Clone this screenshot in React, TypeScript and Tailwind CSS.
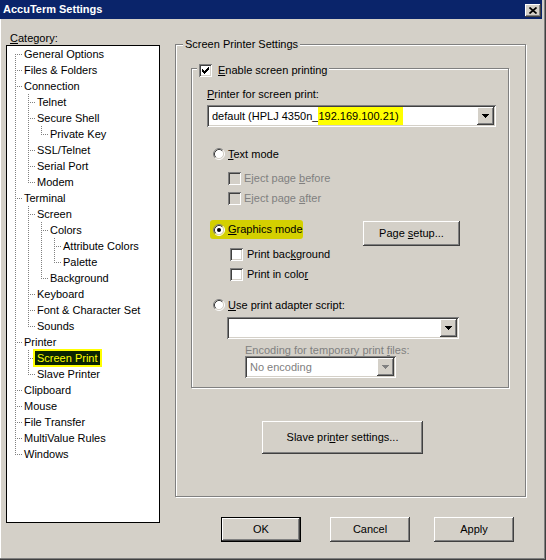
import React from 'react';

const raised =
  'shadow-[inset_-1px_-1px_0_#404040,inset_1px_1px_0_#ffffff,inset_-2px_-2px_0_#808080,inset_2px_2px_0_#d4d0c8]';
const sunken =
  'shadow-[inset_1px_1px_0_#808080,inset_-1px_-1px_0_#ffffff,inset_2px_2px_0_#404040,inset_-2px_-2px_0_#d4d0c8]';
const etched = 'border border-[#808080] shadow-[inset_1px_1px_0_#ffffff,1px_1px_0_#ffffff]';

const tree: [string, number][] = [
  ['General Options', 0],
  ['Files & Folders', 0],
  ['Connection', 0],
  ['Telnet', 1],
  ['Secure Shell', 1],
  ['Private Key', 2],
  ['SSL/Telnet', 1],
  ['Serial Port', 1],
  ['Modem', 1],
  ['Terminal', 0],
  ['Screen', 1],
  ['Colors', 2],
  ['Attribute Colors', 3],
  ['Palette', 3],
  ['Background', 2],
  ['Keyboard', 1],
  ['Font & Character Set', 1],
  ['Sounds', 1],
  ['Printer', 0],
  ['Screen Print', 1],
  ['Slave Printer', 1],
  ['Clipboard', 0],
  ['Mouse', 0],
  ['File Transfer', 0],
  ['MultiValue Rules', 0],
  ['Windows', 0],
];

const hasNext = (i: number) => {
  for (let j = i + 1; j < tree.length; j++) {
    if (tree[j][1] < tree[i][1]) return false;
    if (tree[j][1] === tree[i][1]) return true;
  }
  return false;
};

const Connectors = ({ i }: { i: number }) => {
  const L = tree[i][1];
  const lines: React.ReactNode[] = [];
  for (let k = 0; k < L; k++) {
    let a = i - 1;
    while (tree[a][1] !== k) a--;
    if (hasNext(a)) lines.push(<line key={k} x1={13 * k + 6.5} y1={0} x2={13 * k + 6.5} y2={16} />);
  }
  const x = 13 * L + 6.5;
  lines.push(<line key="v" x1={x} y1={i === 0 ? 8 : 0} x2={x} y2={hasNext(i) ? 16 : 9} />);
  lines.push(<line key="h" x1={x + 1} y1={8.5} x2={13 * L + 13} y2={8.5} />);
  return (
    <svg width={13 * (L + 1)} height={16} className="shrink-0" stroke="#808080" strokeDasharray="1 1" shapeRendering="crispEdges">
      {lines}
    </svg>
  );
};

const Mn = ({ text, at }: { text: string; at: number }) => (
  <>
    {text.slice(0, at)}
    <u>{text[at]}</u>
    {text.slice(at + 1)}
  </>
);

const CheckBox = ({ checked, disabled }: { checked?: boolean; disabled?: boolean }) => (
  <div className={`w-[13px] h-[13px] shrink-0 ${disabled ? 'bg-[#d4d0c8]' : 'bg-white'} ${sunken}`}>
    {checked && (
      <svg width="13" height="13" fill="#000" shapeRendering="crispEdges">
        <rect x="3" y="5" width="1" height="3" />
        <rect x="4" y="6" width="1" height="3" />
        <rect x="5" y="7" width="1" height="3" />
        <rect x="6" y="6" width="1" height="3" />
        <rect x="7" y="5" width="1" height="3" />
        <rect x="8" y="4" width="1" height="3" />
        <rect x="9" y="3" width="1" height="3" />
      </svg>
    )}
  </div>
);

const Radio = ({ checked }: { checked?: boolean }) => (
  <svg width="12" height="12" className="shrink-0" fill="none">
    <circle cx="6" cy="6" r="4.5" fill="#fff" />
    <path d="M2.11 9.89 A5.5 5.5 0 0 1 9.89 2.11" stroke="#808080" />
    <path d="M9.89 2.11 A5.5 5.5 0 0 1 2.11 9.89" stroke="#ffffff" />
    <path d="M2.82 9.18 A4.5 4.5 0 0 1 9.18 2.82" stroke="#404040" />
    <path d="M9.18 2.82 A4.5 4.5 0 0 1 2.82 9.18" stroke="#d4d0c8" />
    {checked && <circle cx="6" cy="6" r="2" fill="#000" />}
  </svg>
);

const Combo = ({ className, disabled, children }: { className: string; disabled?: boolean; children?: React.ReactNode }) => (
  <div className={`flex h-[22px] p-[2px] bg-white ${sunken} ${className}`}>
    <div className={`flex-1 flex items-stretch pl-[3px] overflow-hidden whitespace-nowrap ${disabled ? 'text-[#808080]' : ''}`}>
      {children}
    </div>
    <div className={`w-[17px] flex items-center justify-center bg-[#d4d0c8] ${raised}`}>
      <svg width="7" height="4" shapeRendering="crispEdges">
        <polygon points="0,0 7,0 3.5,4" fill={disabled ? '#808080' : '#000'} />
      </svg>
    </div>
  </div>
);

const Button = ({ className, isDefault, children }: { className: string; isDefault?: boolean; children: React.ReactNode }) =>
  isDefault ? (
    <div className={`border border-black ${className}`}>
      <div className={`w-full h-full flex items-center justify-center ${raised}`}>{children}</div>
    </div>
  ) : (
    <div className={`flex items-center justify-center ${raised} ${className}`}>{children}</div>
  );

const App = () => {
  return (
    <div className="w-[546px] h-[560px] bg-[#d4d0c8] flex flex-col font-['Liberation_Sans',Arial,sans-serif] text-[11px] text-black overflow-hidden shadow-[inset_-1px_-1px_0_#404040,inset_-2px_-2px_0_#808080,inset_1px_0_0_#ffffff]">
      {/* title bar */}
      <div className="h-[19px] mr-[4px] bg-[#0a246a] flex items-start justify-between pl-[3px] pr-[1px] shrink-0">
        <span className="mt-[3px] leading-[13px] text-white font-bold">AccuTerm Settings</span>
        <div className={`mt-[4px] w-[16px] h-[13px] bg-[#d4d0c8] flex items-center justify-center ${raised}`}>
          <svg width="8" height="7">
            <path d="M0.5 0.5 L7.5 6.5 M7.5 0.5 L0.5 6.5" stroke="#000" strokeWidth="1.7" />
          </svg>
        </div>
      </div>

      <div className="flex">
        {/* category tree */}
        <div className="ml-[6px] w-[154px] flex flex-col">
          <div className="mt-[12px] pl-[4px] h-[14px] leading-[14px]">
            <Mn text="Category:" at={0} />
          </div>
          <div className="h-[478px] border border-black bg-white pl-[2px]">
            {tree.map(([label], i) => (
              <div key={label} className="flex items-center h-4">
                <Connectors i={i} />
                {label === 'Screen Print' ? (
                  <span className="px-[2px] h-[14px] leading-[14px] bg-[#0a2400] text-[#ffff00] outline-2 outline-[#ffff00]">
                    {label}
                  </span>
                ) : (
                  <span className="px-[2px] h-[14px] leading-[14px] whitespace-nowrap">{label}</span>
                )}
              </div>
            ))}
          </div>
        </div>

        {/* right side */}
        <div className="ml-[15px] flex flex-col">
          <div className={`relative mt-[25px] w-[351px] h-[453px] ${etched}`}>
            <span className="absolute -top-[8px] left-[7px] px-[2px] h-[14px] leading-[14px] bg-[#d4d0c8]">
              Screen Printer Settings
            </span>

            <div className={`relative ml-[15px] mt-[23px] w-[318px] h-[320px] ${etched}`}>
              <div className="absolute -top-[6px] left-[5px] px-[2px] h-[14px] flex items-center bg-[#d4d0c8]">
                <CheckBox checked />
                <span className="ml-[6px] leading-[14px]">
                  <Mn text="Enable screen printing" at={0} />
                </span>
              </div>

              <div className="mt-[18px] ml-[15px] h-[14px] leading-[14px]">
                <Mn text="Printer for screen print:" at={0} />
              </div>
              <Combo className="mt-[4px] ml-[15px] w-[289px]">
                <span className="flex items-center">default (HPLJ 4350n_</span>
                <span className="flex items-center bg-[#ffff00] pr-[4px]">192.169.100.21)</span>
              </Combo>

              <div className="mt-[19px] ml-[21px] h-4 flex items-center">
                <Radio />
                <span className="ml-[3px]">
                  <Mn text="Text mode" at={0} />
                </span>
              </div>
              <div className="mt-[8px] ml-[36px] h-4 flex items-center text-[#808080]">
                <CheckBox disabled />
                <span className="ml-[3px]">
                  <Mn text="Eject page before" at={11} />
                </span>
              </div>
              <div className="mt-[4px] ml-[36px] h-4 flex items-center text-[#808080]">
                <CheckBox disabled />
                <span className="ml-[3px]">
                  <Mn text="Eject page after" at={11} />
                </span>
              </div>

              <div className="mt-[14px] flex items-start">
                <div className="ml-[18px] w-[93px] h-[19px] pl-[3px] flex items-center bg-[#d4d000] rounded-[3px]">
                  <Radio checked />
                  <span className="ml-[3px]">
                    <Mn text="Graphics mode" at={0} />
                  </span>
                </div>
                <Button className="mt-px ml-[60px] w-[97px] h-[25px]">
                  <span>
                    <Mn text="Page setup..." at={5} />
                  </span>
                </Button>
              </div>
              <div className="ml-[38px] h-4 flex items-center">
                <CheckBox />
                <span className="ml-[4px]">
                  <Mn text="Print background" at={9} />
                </span>
              </div>
              <div className="mt-[4px] ml-[38px] h-4 flex items-center">
                <CheckBox />
                <span className="ml-[4px]">
                  <Mn text="Print in color" at={13} />
                </span>
              </div>

              <div className="mt-[15px] ml-[21px] h-4 flex items-center">
                <Radio />
                <span className="ml-[3px]">
                  <Mn text="Use print adapter script:" at={0} />
                </span>
              </div>
              <Combo className="mt-[4px] ml-[35px] w-[232px]" />
              <div className="mt-[5px] ml-[53px] h-[12px] leading-[12px] text-[#808080]">
                <Mn text="Encoding for temporary print files:" at={29} />
              </div>
              <Combo className="ml-[53px] w-[151px]" disabled>
                <span className="flex items-center">No encoding</span>
              </Combo>
            </div>

            <Button className="mt-[33px] ml-[86px] w-[161px] h-[33px]">
              <span>
                <Mn text="Slave printer settings..." at={9} />
              </span>
            </Button>
          </div>

          <div className="mt-[20px] flex">
            <Button isDefault className="ml-[46px] w-[80px] h-[25px]">
              OK
            </Button>
            <Button className="ml-[29px] w-[80px] h-[25px]">Cancel</Button>
            <Button className="ml-[24px] w-[80px] h-[25px]">Apply</Button>
          </div>
        </div>
      </div>
    </div>
  );
};

export default App;
